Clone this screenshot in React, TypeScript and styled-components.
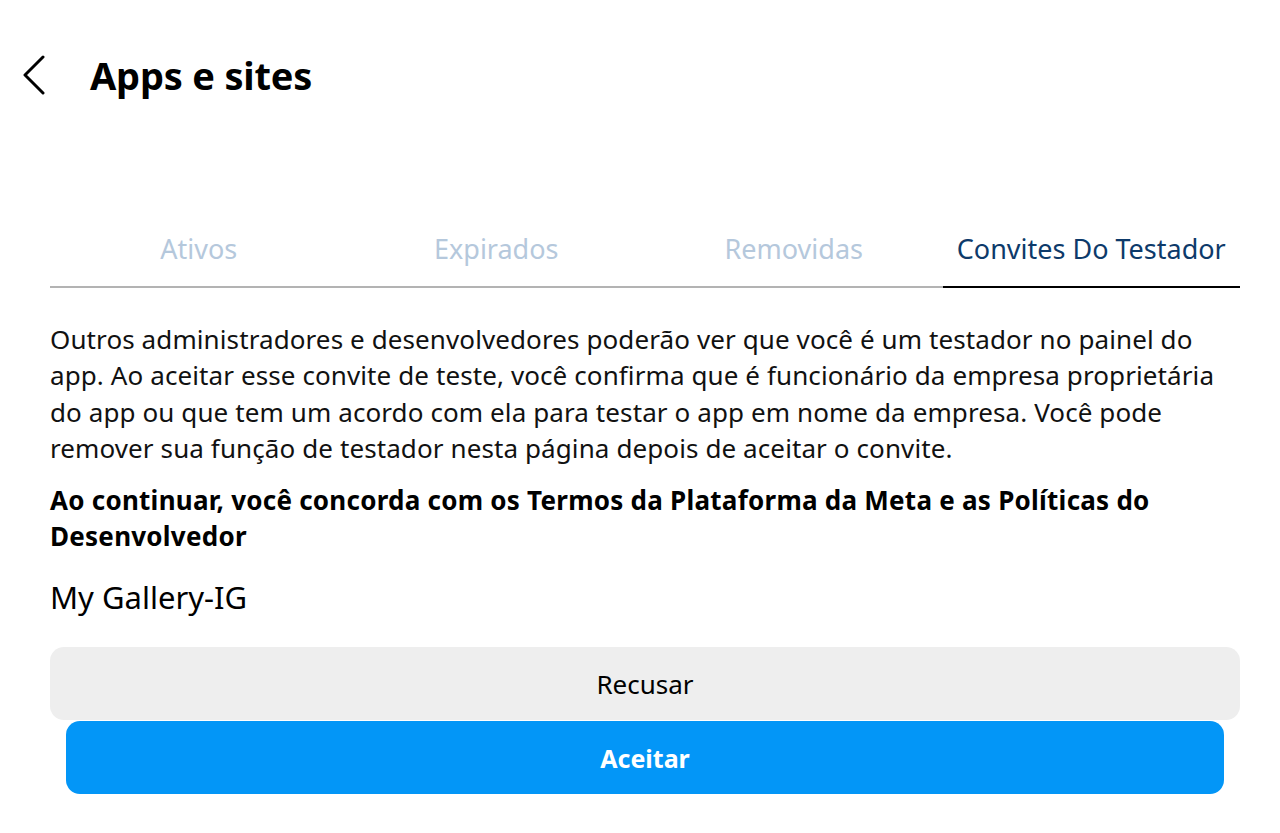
import styled, { createGlobalStyle } from "styled-components";

const FONT = `"Noto Sans", "Open Sans", Arial, sans-serif`;

const GlobalStyle = createGlobalStyle`
  html, body {
    margin: 0;
    padding: 0;
    background: #ffffff;
  }
  body {
    font-family: ${FONT};
    color: #000000;
  }
`;

const Page = styled.div`
  width: 1280px;
  height: 833px;
  overflow: hidden;
  box-sizing: border-box;
  padding: 0 40px 0 50px;
`;

const Header = styled.header`
  display: flex;
  align-items: center;
  height: 150px;
  margin-left: -30px;
  gap: 42px;
`;

const BackButton = styled.button`
  width: 28px;
  height: 40px;
  padding: 0;
  border: none;
  background: none;
  display: flex;
  align-items: center;
  justify-content: center;
  cursor: pointer;
`;

const Title = styled.h1`
  margin: 0;
  font-size: 38px;
  font-weight: 700;
  letter-spacing: -0.2px;
`;

const Tabs = styled.nav`
  display: grid;
  grid-template-columns: repeat(4, 1fr);
  margin-top: 72px;
  border-bottom: 2px solid #b3b3b3;
`;

const Tab = styled.div<{ $active?: boolean }>`
  height: 66px;
  display: flex;
  align-items: center;
  justify-content: center;
  padding-bottom: 12px;
  box-sizing: border-box;
  font-size: 27px;
  color: ${(p) => (p.$active ? "#0d3a6a" : "#b5c8dc")};
  margin-bottom: -2px;
  border-bottom: 2px solid ${(p) => (p.$active ? "#000000" : "transparent")};
`;

const Body = styled.p`
  margin: 33px 0 0;
  font-size: 26px;
  line-height: 36.3px;
  letter-spacing: 0.1px;
  color: #111111;
`;

const Notice = styled.p`
  margin: 16px 0 0;
  font-size: 26px;
  line-height: 36px;
  font-weight: 700;
  letter-spacing: 0.25px;
`;

const AppName = styled.div`
  margin-top: 23px;
  font-size: 31px;
  line-height: 40px;
`;

const Actions = styled.div`
  display: flex;
  flex-direction: column;
  margin-top: 30px;
`;

const ActionButton = styled.button<{ $primary?: boolean }>`
  height: 73px;
  border: none;
  border-radius: 14px;
  font-family: ${FONT};
  font-size: ${(p) => (p.$primary ? "25px" : "26px")};
  cursor: pointer;
  background: ${(p) => (p.$primary ? "#0396f7" : "#eeeeee")};
  color: ${(p) => (p.$primary ? "#ffffff" : "#000000")};
  font-weight: ${(p) => (p.$primary ? 700 : 400)};
  margin: ${(p) => (p.$primary ? "1px 16px 0" : "0")};
`;

const tabs = ["Ativos", "Expirados", "Removidas", "Convites Do Testador"];

export default function App() {
  return (
    <>
      <GlobalStyle />
      <Page>
        <Header>
          <BackButton aria-label="Voltar">
            <svg width="26" height="40" viewBox="0 0 26 40" fill="none">
              <path
                d="M22 2 L4 20 L22 38"
                stroke="#000"
                strokeWidth="3"
                strokeLinecap="round"
                strokeLinejoin="round"
              />
            </svg>
          </BackButton>
          <Title>Apps e sites</Title>
        </Header>
        <Tabs>
          {tabs.map((t, i) => (
            <Tab key={t} $active={i === 3}>
              {t}
            </Tab>
          ))}
        </Tabs>
        <Body>
          Outros administradores e desenvolvedores poderão ver que você é um
          testador no painel do app. Ao aceitar esse convite de teste, você
          confirma que é funcionário da empresa proprietária do app ou que tem
          um acordo com ela para testar o app em nome da empresa. Você pode
          remover sua função de testador nesta página depois de aceitar o
          convite.
        </Body>
        <Notice>
          Ao continuar, você concorda com os Termos da Plataforma da Meta e as
          Políticas do Desenvolvedor
        </Notice>
        <AppName>My Gallery-IG</AppName>
        <Actions>
          <ActionButton>Recusar</ActionButton>
          <ActionButton $primary>Aceitar</ActionButton>
        </Actions>
      </Page>
    </>
  );
}
